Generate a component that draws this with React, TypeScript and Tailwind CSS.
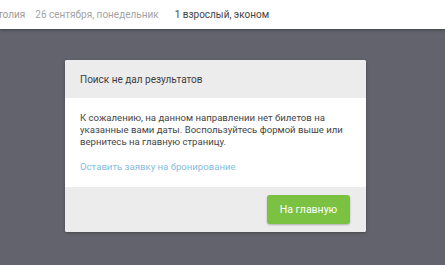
export default function App() {
  return (
    <div className="flex h-[265px] w-[445px] flex-col overflow-hidden bg-[#62636c] font-['Roboto',sans-serif]">
      {/* top summary bar */}
      <div className="flex h-[29px] shrink-0 items-center whitespace-nowrap bg-white text-[10px] shadow-[0_1px_3px_rgba(0,0,0,0.35)]">
        <span className="-ml-[2px] text-[#9a9a9a]">толия</span>
        <span className="ml-[10px] text-[#a3a3a3]">26 сентября, понедельник</span>
        <span className="ml-[16px] text-[#444]">1 взрослый, эконом</span>
      </div>

      <div className="flex justify-start pl-[65px] pt-[31px]">
        <div className="w-[301px] overflow-hidden rounded-[2px] bg-white shadow-[0_1px_3px_rgba(0,0,0,0.3)]">
          <div className="flex h-[38px] items-center bg-[#ececec] px-[15px] text-[10px] text-[#3d3d3d]">
            Поиск не дал результатов
          </div>
          <div className="px-[15px] pb-[14px] pt-[14px] text-[9.6px] leading-[12px] text-[#454545]">
            <p>
              К сожалению, на данном направлении нет билетов на указанные вами даты. Воспользуйтесь формой выше или
              вернитесь на главную страницу.
            </p>
            <a href="#" className="mt-[13px] block text-[#86bde0]">
              Оставить заявку на бронирование
            </a>
          </div>
          <div className="flex h-[45px] items-center justify-end bg-[#ececec] pr-[16px]">
            <button className="h-[29px] w-[83px] rounded-[3px] bg-[#7cc242] text-[10.5px] text-white shadow-[0_1px_2px_rgba(0,0,0,0.25)]">
              На главную
            </button>
          </div>
        </div>
      </div>
    </div>
  )
}
